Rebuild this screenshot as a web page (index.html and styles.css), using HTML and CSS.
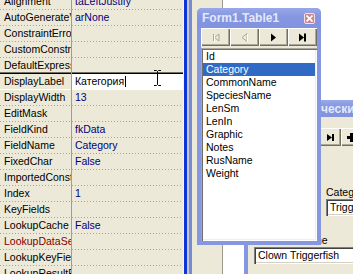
FILE: index.html
```html
<!DOCTYPE html>
<html>
<head>
<meta charset="utf-8">
<link rel="stylesheet" href="styles.css">
</head>
<body>
<div class="screen">
  <div class="inspector">
    <div class="rows">
      <div class="row"><span class="name">Alignment</span><span class="val">taLeftJustify</span></div>
      <div class="row"><span class="name">AutoGenerateValue</span><span class="val">arNone</span></div>
      <div class="row"><span class="name">ConstraintErrorMessage</span><span class="val"></span></div>
      <div class="row"><span class="name">CustomConstraint</span><span class="val"></span></div>
      <div class="row"><span class="name">DefaultExpression</span><span class="val"></span></div>
      <div class="row sel"><span class="name">DisplayLabel</span><span class="val edit">Категория<span class="caret"></span></span></div>
      <div class="row"><span class="name">DisplayWidth</span><span class="val">13</span></div>
      <div class="row"><span class="name">EditMask</span><span class="val"></span></div>
      <div class="row"><span class="name">FieldKind</span><span class="val">fkData</span></div>
      <div class="row"><span class="name">FieldName</span><span class="val">Category</span></div>
      <div class="row"><span class="name">FixedChar</span><span class="val">False</span></div>
      <div class="row"><span class="name">ImportedConstraint</span><span class="val"></span></div>
      <div class="row"><span class="name">Index</span><span class="val">1</span></div>
      <div class="row"><span class="name">KeyFields</span><span class="val"></span></div>
      <div class="row"><span class="name">LookupCache</span><span class="val">False</span></div>
      <div class="row"><span class="name ref">LookupDataSet</span><span class="val"></span></div>
      <div class="row"><span class="name">LookupKeyFields</span><span class="val"></span></div>
      <div class="row"><span class="name">LookupResultField</span><span class="val"></span></div>
    </div>
    <svg class="ibeam" width="9" height="17" viewBox="0 0 9 17">
      <path d="M1 0.5h2.5l1 1l1-1h2.5M4.5 1.5v13M1 15.5h2.5l1-1l1 1h2.5" fill="none" stroke="#000" stroke-width="1"/>
    </svg>
  </div>
  <div class="edge"><i class="e1"></i><i class="e2"></i><i class="e3"></i><i class="e4"></i></div>
  <div class="desk">
    <div class="paper"></div>

    <div class="win back">
      <div class="caption"><span class="cap-text">ческий справочник</span></div>
      <div class="client">
        <div class="nav small">
          <span class="btn"></span><span class="btn"></span><span class="btn"></span>
          <span class="btn"><svg width="9" height="9" viewBox="0 0 9 9"><path d="M1 1l5 3.5l-5 3.5z M6 1h2v7h-2z" fill="#000"/></svg></span>
          <span class="btn"><svg width="9" height="9" viewBox="0 0 9 9"><path d="M3 0h3v3h3v3h-3v3h-3v-3h-3v-3h3z" fill="#000"/></svg></span>
        </div>
        <div class="group cat">
          <span class="lbl">Category</span>
          <span class="field">Triggerfish</span>
        </div>
        <div class="group cn">
          <span class="lbl right">Common Name</span>
          <span class="field wide">Clown Triggerfish</span>
        </div>
      </div>
    </div>

    <div class="win t1">
      <div class="caption">
        <span class="cap-text">Form1.Table1</span>
        <span class="close"><svg width="7" height="7" viewBox="0 0 7 7"><path d="M0.5 0.5l6 6M6.5 0.5l-6 6" stroke="#fff" stroke-width="1.6"/></svg></span>
      </div>
      <div class="client">
        <div class="nav">
          <span class="btn"><svg width="9" height="9" viewBox="0 0 9 9"><path d="M2.5 1v7M8 1L3.5 4.5L8 8z" fill="none" stroke="#aca899"/><path d="M3.5 2v7" stroke="#fff" fill="none"/></svg></span>
          <span class="btn"><svg width="9" height="9" viewBox="0 0 9 9"><path d="M7 0.5L2 4.5L7 8.5z" fill="none" stroke="#aca899"/><path d="M7.5 1v8" stroke="#fff"/></svg></span>
          <span class="btn"><svg width="9" height="9" viewBox="0 0 9 9"><path d="M2 0.5l5 4l-5 4z" fill="#000"/></svg></span>
          <span class="btn"><svg width="9" height="9" viewBox="0 0 9 9"><path d="M1 0.5l5 4l-5 4z M6 0.5h2v8h-2z" fill="#000"/></svg></span>
        </div>
        <ul class="list">
          <li>Id</li>
          <li class="on">Category</li>
          <li>CommonName</li>
          <li>SpeciesName</li>
          <li>LenSm</li>
          <li>LenIn</li>
          <li>Graphic</li>
          <li>Notes</li>
          <li>RusName</li>
          <li>Weight</li>
        </ul>
      </div>
    </div>
  </div>
</div>
</body>
</html>
```

FILE: styles.css
```css
html, body {
  margin: 0;
  padding: 0;
}
body {
  width: 353px;
  height: 274px;
  overflow: hidden;
  background: #ece9d8;
  font-family: "Liberation Sans", Arial, sans-serif;
  font-size: 10.5px;
  color: #000;
}
.screen {
  display: flex;
  height: 274px;
}

/* ---------- object inspector ---------- */
.inspector {
  width: 183px;
  flex: none;
  position: relative;
  overflow: hidden;
}
.rows {
  margin-top: -6px;
}
.row {
  display: grid;
  grid-template-columns: 72px 1fr;
  height: 16px;
  background: repeating-linear-gradient(90deg, #a8a597 0 1px, transparent 1px 3px) left bottom / 100% 1px no-repeat;
}
.name {
  padding-left: 4px;
  line-height: 15px;
  white-space: nowrap;
  overflow: hidden;
  border-right: 1px solid #a09e91;
}
.name.ref {
  color: #800000;
}
.val {
  padding-left: 3px;
  line-height: 15px;
  color: #000080;
  white-space: nowrap;
  overflow: hidden;
}
.row.sel {
  background: none;
  box-shadow: 0 -1px #000, 0 -2px #716f64, inset 0 -1px #fff;
}
.row.sel .name {
  line-height: 14px;
}
.val.edit {
  background: #fff;
  color: #000;
  margin: 0 0 1px;
  line-height: 13px;
  display: flex;
  align-items: center;
}
.caret {
  width: 1px;
  height: 11px;
  background: #000;
  margin-left: 1px;
}
.ibeam {
  position: absolute;
  left: 153px;
  top: 70px;
}

/* ---------- vertical edges ---------- */
.edge {
  display: flex;
  flex: none;
}
.edge i { display: block; height: 100%; }
.e1 { width: 1px; background: #f5f4ee; }
.e2 { width: 3px; background: #0a36dc; }
.e3 { width: 2px; background: #c9c8c2; }
.e4 { width: 3px; background: #7689de; }

/* ---------- desktop area ---------- */
.desk {
  flex: 1;
  position: relative;
  overflow: hidden;
}
.paper {
  position: absolute;
  left: 30px;
  top: 0;
  right: 0;
  bottom: 0;
  background: #fff;
  border-left: 1px solid #9a988c;
}

.win {
  position: absolute;
  box-sizing: border-box;
  background: #8597e1;
  padding: 0 4px 4px;
  display: flex;
  flex-direction: column;
  border-radius: 5px 5px 0 0;
}
.caption {
  height: 20px;
  flex: none;
  display: flex;
  align-items: center;
  color: #e3e8f9;
  font-weight: bold;
  font-size: 12px;
  background: linear-gradient(180deg, #98a8e7 0%, #8597e1 40%, #8193df 100%);
  margin: 0 -4px;
  padding: 0 4px 0 5px;
  border-radius: 5px 5px 0 0;
}
.cap-text {
  flex: 1;
  white-space: nowrap;
  overflow: hidden;
}
.close {
  width: 11px;
  height: 11px;
  flex: none;
  box-sizing: border-box;
  background: #c9878f;
  border: 1px solid #f3dfe3;
  border-radius: 2px;
  display: flex;
  align-items: center;
  justify-content: center;
  margin-right: 2px;
}
.client {
  flex: 1;
  background: #ece9d8;
  display: flex;
  flex-direction: column;
  min-height: 0;
}

/* Form1.Table1 window */
.t1 {
  left: 5px;
  top: 8px;
  width: 124px;
  height: 237px;
}
.nav {
  display: flex;
  height: 18px;
  flex: none;
}
.btn {
  flex: 1;
  display: flex;
  align-items: center;
  justify-content: center;
  box-shadow: inset 1px 1px #fff, inset -1px -1px #716f64, inset -2px -2px #aca899;
}
.list {
  list-style: none;
  margin: 2px 0 0;
  padding: 2px 2px;
  flex: 1;
  background: #fff;
  box-shadow: inset 1px 1px #aca899, inset 2px 2px #716f64, inset -1px -1px #fff, inset -2px -2px #f1efe2;
}
.list li {
  height: 13px;
  line-height: 13px;
  padding-left: 3px;
  font-size: 10.5px;
}
.list li.on {
  background: #316ac5;
  color: #fff;
}

/* back window */
.back {
  left: 52px;
  top: 100px;
  width: 200px;
  height: 200px;
}
.back .caption {
  height: 17px;
}
.back .cap-text {
  padding-left: 72px;
}
.nav.small {
  margin: 11px 0 0 9px;
  width: 105px;
  height: 18px;
}
.group {
  display: flex;
  flex-direction: column;
}
.cat {
  margin: 40px 0 0 78px;
}
.cn {
  margin: 18px 0 0 6px;
}
.lbl {
  line-height: 12px;
  white-space: nowrap;
}
.lbl.right {
  width: 68px;
  text-align: right;
}
.field {
  margin-top: 1px;
  height: 17px;
  width: 80px;
  box-sizing: border-box;
  background: #fff;
  padding: 0 0 0 4px;
  line-height: 17px;
  box-shadow: inset 1px 1px #808080, inset 2px 2px #404040, inset -1px -1px #fff, inset -2px -2px #d4d0c8;
  white-space: nowrap;
  overflow: hidden;
}
.field.wide {
  width: 160px;
}
```
